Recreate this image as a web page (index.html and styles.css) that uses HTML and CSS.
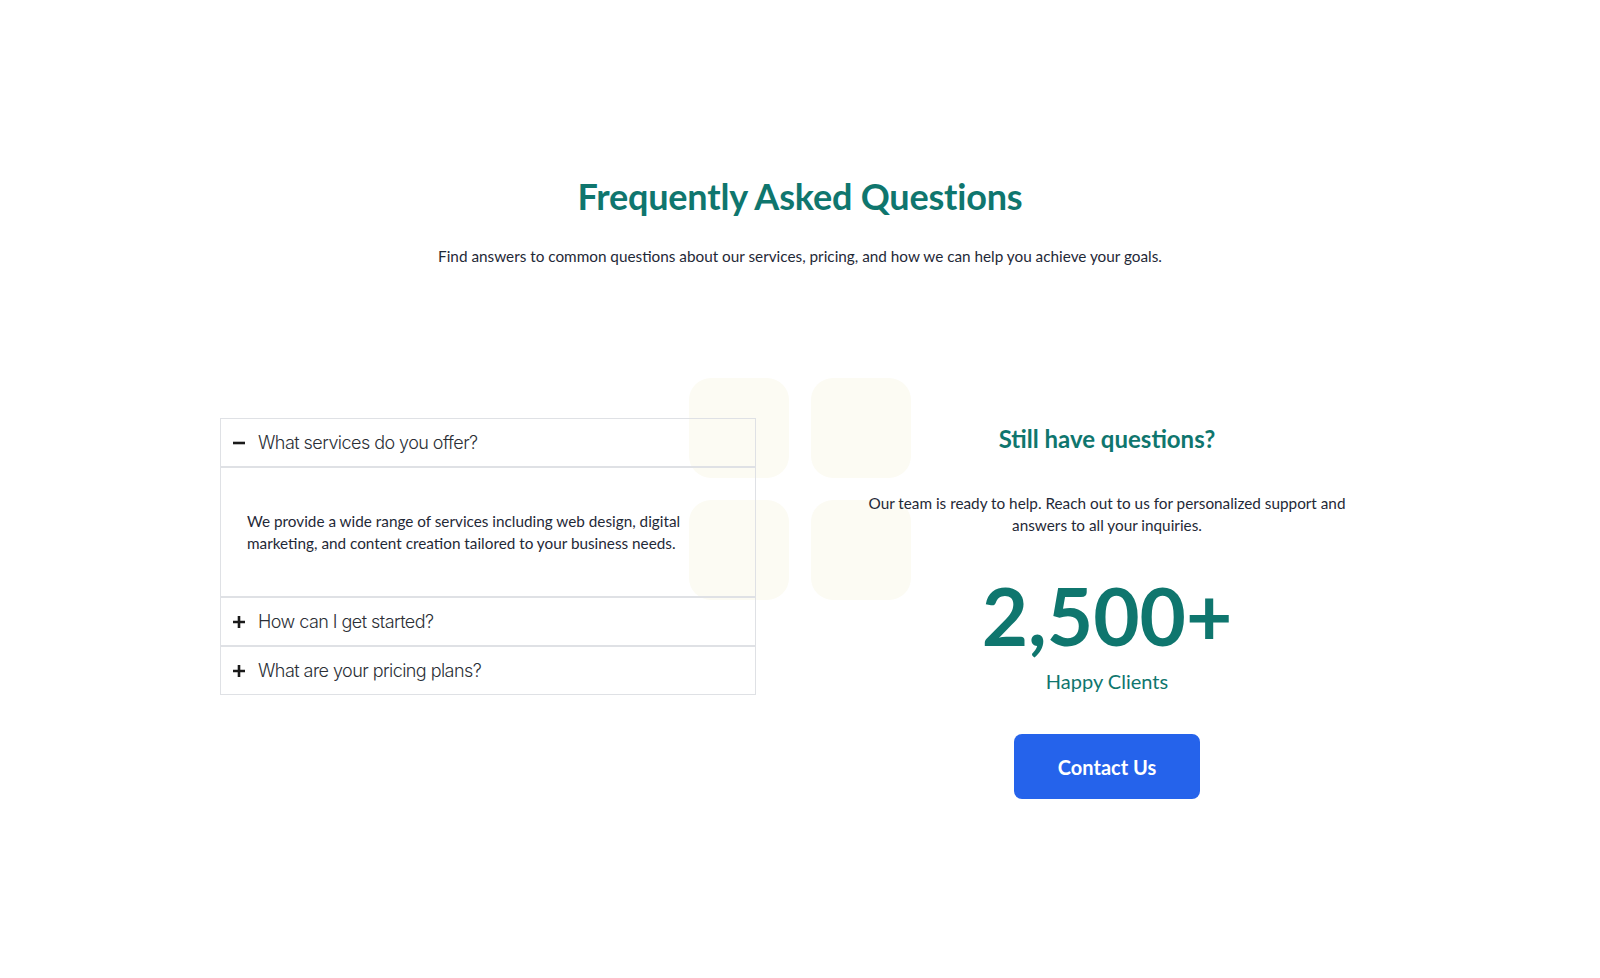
FILE: index.html
```html
<!DOCTYPE html>
<html lang="en">
<head>
<meta charset="utf-8">
<title>FAQ</title>
<link rel="stylesheet" href="styles.css">
</head>
<body>
<section class="faq">
  <header class="faq-head">
    <h1 class="faq-title">Frequently Asked Questions</h1>
    <p class="faq-sub">Find answers to common questions about our services, pricing, and how we can help you achieve your goals.</p>
  </header>

  <div class="faq-body">
    <div class="deco" aria-hidden="true">
      <span class="deco-sq"></span><span class="deco-sq"></span>
      <span class="deco-sq"></span><span class="deco-sq"></span>
    </div>

    <div class="accordion">
      <div class="acc-head">
        <svg class="acc-icon" viewBox="0 0 14 14"><path d="M1 7h12" /></svg>
        <span class="acc-q">What services do you offer?</span>
      </div>
      <div class="acc-panel">
        <p class="acc-a">We provide a wide range of services including web design, digital marketing, and content creation tailored to your business needs.</p>
      </div>
      <div class="acc-head">
        <svg class="acc-icon" viewBox="0 0 14 14"><path d="M1 7h12M7 1v12" /></svg>
        <span class="acc-q">How can I get started?</span>
      </div>
      <div class="acc-head">
        <svg class="acc-icon" viewBox="0 0 14 14"><path d="M1 7h12M7 1v12" /></svg>
        <span class="acc-q">What are your pricing plans?</span>
      </div>
    </div>

    <div class="cta">
      <h2 class="cta-title">Still have questions?</h2>
      <p class="cta-text">Our team is ready to help. Reach out to us for personalized support and answers to all your inquiries.</p>
      <div class="stat-num">2,500+</div>
      <div class="stat-label">Happy Clients</div>
      <a class="cta-btn" href="#">Contact Us</a>
    </div>
  </div>
</section>
</body>
</html>
```

FILE: styles.css
```css
* { box-sizing: border-box; }

html, body {
  margin: 0;
  padding: 0;
  background: #ffffff;
}

body {
  font-family: "Lato", "Noto Sans", sans-serif;
  color: #1f2937;
}

.faq {
  padding-top: 175px;
}

.faq-head {
  text-align: center;
}

.faq-title {
  margin: 0;
  font-size: 36px;
  line-height: 43px;
  font-weight: 700;
  color: #0f766e;
  letter-spacing: -0.2px;
}

.faq-sub {
  margin: 26px 0 0;
  font-size: 15.3px;
  line-height: 24px;
  color: #1f2937;
}

.faq-body {
  position: relative;
  width: 1160px;
  margin: 150px auto 0;
  display: grid;
  grid-template-columns: 536px 546px;
  column-gap: 78px;
  align-items: start;
}

.deco {
  position: absolute;
  left: 469px;
  top: -40px;
  display: grid;
  grid-template-columns: 100px 100px;
  grid-auto-rows: 100px;
  gap: 22px;
  z-index: 0;
}

.deco-sq {
  background: #fcfbf3;
  border-radius: 22px;
}

.accordion {
  position: relative;
  z-index: 1;
}

.acc-head {
  height: 49px;
  border: 1px solid #dfe1e5;
  display: flex;
  align-items: center;
  padding: 0 11px;
  gap: 12px;
}

.acc-icon {
  width: 14px;
  height: 14px;
  fill: none;
  stroke: #1a1a1a;
  stroke-width: 2.6;
  flex: none;
}

.acc-q {
  font-family: "Inter", "Lato", sans-serif;
  font-weight: 300;
  font-size: 18px;
  color: #2b2f36;
  letter-spacing: -0.55px;
}

.acc-panel {
  height: 130px;
  border: 1px solid #dfe1e5;
  display: flex;
  align-items: center;
  padding: 0 26px;
}

.acc-a {
  margin: 0;
  max-width: 450px;
  font-size: 15.3px;
  line-height: 22px;
  color: #1f2937;
}

.cta {
  position: relative;
  z-index: 1;
  padding-top: 5px;
  display: flex;
  flex-direction: column;
  align-items: center;
  text-align: center;
}

.cta-title {
  margin: 0;
  font-size: 24px;
  line-height: 32px;
  font-weight: 700;
  color: #0f766e;
}

.cta-text {
  margin: 38px 0 0;
  max-width: 500px;
  font-size: 15.3px;
  line-height: 21.5px;
  color: #1f2937;
}

.stat-num {
  margin-top: 43px;
  font-size: 80px;
  line-height: 72px;
  font-weight: 700;
  color: #0f766e;
}

.stat-label {
  margin-top: 16px;
  font-size: 20px;
  line-height: 28px;
  color: #0f766e;
}

.cta-btn {
  margin-top: 39px;
  height: 65px;
  width: 186px;
  display: flex;
  align-items: center;
  justify-content: center;
  background: #2563eb;
  border-radius: 8px;
  color: #ffffff;
  font-size: 20px;
  font-weight: 700;
  text-decoration: none;
}
```
